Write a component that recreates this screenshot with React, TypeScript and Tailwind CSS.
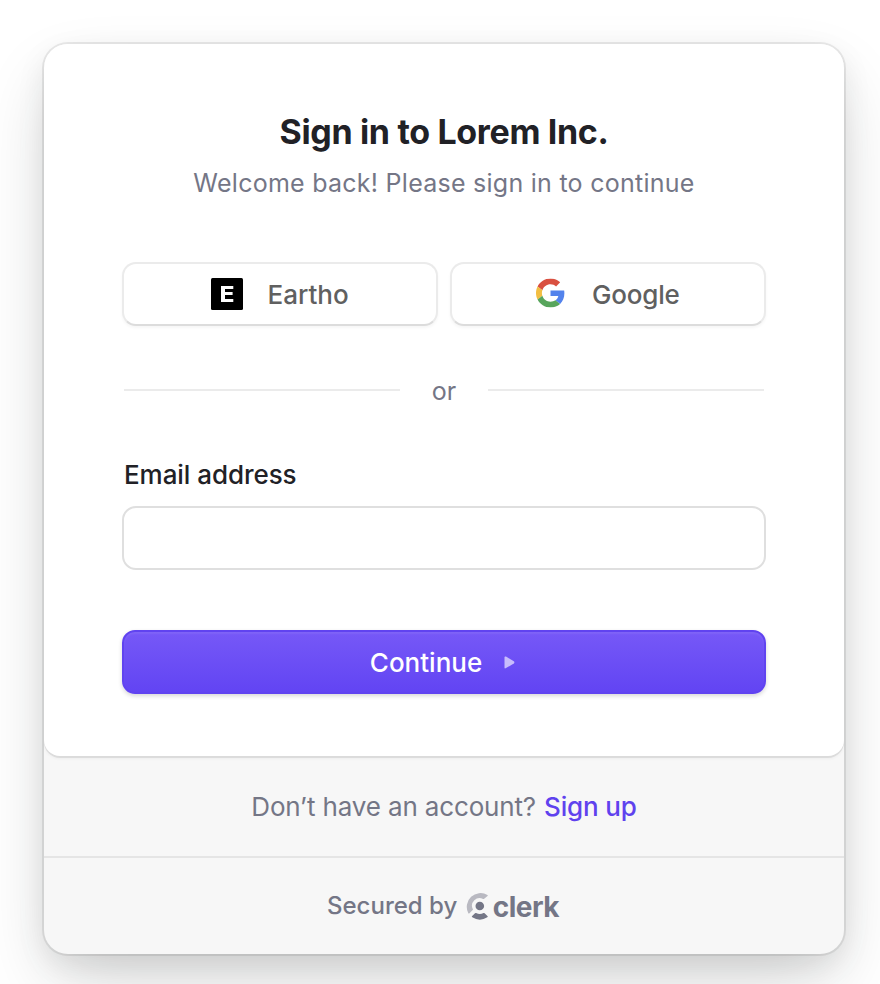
function EarthoIcon() {
  return (
    <svg width="32" height="32" viewBox="0 0 32 32" aria-hidden="true">
      <rect width="32" height="32" rx="1.5" />
      <path d="M10 8h12.3v3h-8.3v3h7.6v3h-7.6v4h8.3v3H10z" fill="#fff" />
    </svg>
  );
}

function GoogleIcon() {
  return (
    <svg className="-translate-y-[1.5px]" width="29" height="29" viewBox="0 0 48 48" aria-hidden="true">
      <path fill="#d95040" d="M24 9.5c3.54 0 6.71 1.22 9.21 3.6l6.85-6.85C35.9 2.38 30.47 0 24 0 14.62 0 6.51 5.38 2.56 13.22l7.98 6.19C12.43 13.72 17.74 9.5 24 9.5z" />
      <path fill="#5383ec" d="M46.98 24.55c0-1.57-.15-3.09-.38-4.55H24v9.02h12.94c-.58 2.96-2.26 5.48-4.78 7.18l7.73 6c4.51-4.18 7.09-10.36 7.09-17.65z" />
      <path fill="#f2be42" d="M10.53 28.59c-.48-1.45-.76-2.99-.76-4.59s.27-3.14.76-4.59l-7.98-6.19C.92 16.46 0 20.12 0 24s.92 7.54 2.56 10.78z" />
      <path fill="#58a55c" d="M24 48c6.48 0 11.93-2.13 15.89-5.81l-7.73-6c-2.15 1.45-4.92 2.3-8.16 2.3-6.26 0-11.57-4.22-13.47-9.91l-7.98 6.19C6.51 42.62 14.62 48 24 48z" />
    </svg>
  );
}

function ClerkMark() {
  return (
    <svg width="23" height="28" viewBox="0 0 23 28" aria-hidden="true">
      <path fill="#b9b9c1" d="M21.4 2.9A13.8 13.8 0 0 0 2.2 21a.8.8 0 0 0 1.3.2l3.2-3.1a.9.9 0 0 0 .1-1.1 7.6 7.6 0 0 1 10.3-10.1.9.9 0 0 0 1.1-.1l3.3-2.7a.8.8 0 0 0-.1-1.2z" />
      <circle cx="13.8" cy="14" r="4.3" fill="#747686" />
      <path fill="#747686" d="M21.3 25.2a.8.8 0 0 0 .1-1.3l-2.8-2.7a.9.9 0 0 0-1.1-.1 7.8 7.8 0 0 1-7.4 0 .9.9 0 0 0-1.1.1l-2.8 2.7a.8.8 0 0 0 .1 1.3 13.8 13.8 0 0 0 15 0z" />
    </svg>
  );
}

const socialButton =
  "flex h-16 w-[316px] shrink-0 items-center rounded-[14px] border-2 border-[#ebebeb] border-b-[#dcdcdc] bg-white text-[26px] font-medium text-[#606060] shadow-[0_2px_3px_rgba(0,0,0,0.04)]";

export default function App() {
  return (
    <div className="h-[984px] w-[880px] overflow-hidden bg-white pl-[44px] pt-[44px] font-['Inter',sans-serif]">
      <main className="flex h-[910px] w-[800px] flex-col rounded-[24px] bg-[#f7f7f7] shadow-[0_0_0_2px_rgba(0,0,0,0.08),0_10px_30px_rgba(0,0,0,0.08),0_30px_70px_-10px_rgba(25,32,30,0.2)]">
        <section className="flex h-[712px] shrink-0 flex-col rounded-t-[24px] rounded-b-[16px] bg-white px-[78px] shadow-[0_2px_0_rgba(0,0,0,0.08),0_3px_3px_rgba(0,0,0,0.04)]">
          <h1 className="mt-[67px] h-[42px] whitespace-nowrap text-center text-[34px] font-bold leading-[42px] tracking-[-0.34px] text-[#212126]">Sign in to Lorem Inc.</h1>
          <p className="mt-[12px] h-[36px] whitespace-nowrap text-center text-[25px] leading-[36px] tracking-[0.26px] text-[#747686]">Welcome back! Please sign in to continue</p>
          <div className="mt-[61px] flex gap-3">
            <button className={`${socialButton} gap-[24.5px] pl-[87px]`}>
              <EarthoIcon />
              <span>Eartho</span>
            </button>
            <button className={`${socialButton} gap-[27px] pl-[84px] tracking-[-0.2px]`}>
              <GoogleIcon />
              <span>Google</span>
            </button>
          </div>
          <div className="mt-[46px] flex h-[40px] items-center gap-8 px-0.5 text-[25px] text-[#747686]">
            <span className="mb-1 h-0.5 flex-1 bg-[#ebebeb]" />
            <span>or</span>
            <span className="mb-1 h-0.5 flex-1 bg-[#ebebeb]" />
          </div>
          <label htmlFor="email" className="mt-[44px] h-[38px] pl-0.5 text-[26px] font-medium leading-[38px] tracking-[-0.06px] text-[#212126]">Email address</label>
          <input id="email" type="email" className="mt-[12px] h-16 shrink-0 rounded-[14px] border-2 border-[#dfdfdf] bg-white px-6 text-[26px] outline-none" />
          <button className="mt-[60px] flex h-16 shrink-0 items-center justify-center gap-[22px] rounded-[13px] border-2 border-[#6043f0] bg-linear-to-b from-[#7658f7] to-[#6244f3] pr-[3px] pt-px text-[26px] font-medium text-white shadow-[inset_0_2px_2px_rgba(255,255,255,0.07),0_2px_4px_rgba(0,0,0,0.16)]">
            <span>Continue</span>
            <svg width="11" height="13" viewBox="0 0 11 13" aria-hidden="true">
              <path fill="#c8bcfc" d="M.5 1.5Q.5 0 2 .6L9.8 5.2Q11 6.5 9.8 7.4L2 12.1Q.5 12.9.5 11.5z" />
            </svg>
          </button>
        </section>
        <div className="flex h-[100px] shrink-0 items-center justify-center gap-2 text-[26px] tracking-[-0.15px] text-[#747686]">
          <span>Don’t have an account?</span>
          <a className="font-medium text-[#5f42ee]">Sign up</a>
        </div>
        <footer className="flex flex-1 items-center border-t-2 border-[#e5e5e5] pl-[283px] text-[24px] font-medium text-[#747686]">
          <span>Secured by</span>
          <div className="ml-[9px] flex items-center gap-[3.5px]">
            <ClerkMark />
            <span className="pt-0.5 text-[28px] font-bold leading-7 tracking-[-0.5px]">clerk</span>
          </div>
        </footer>
      </main>
    </div>
  );
}
